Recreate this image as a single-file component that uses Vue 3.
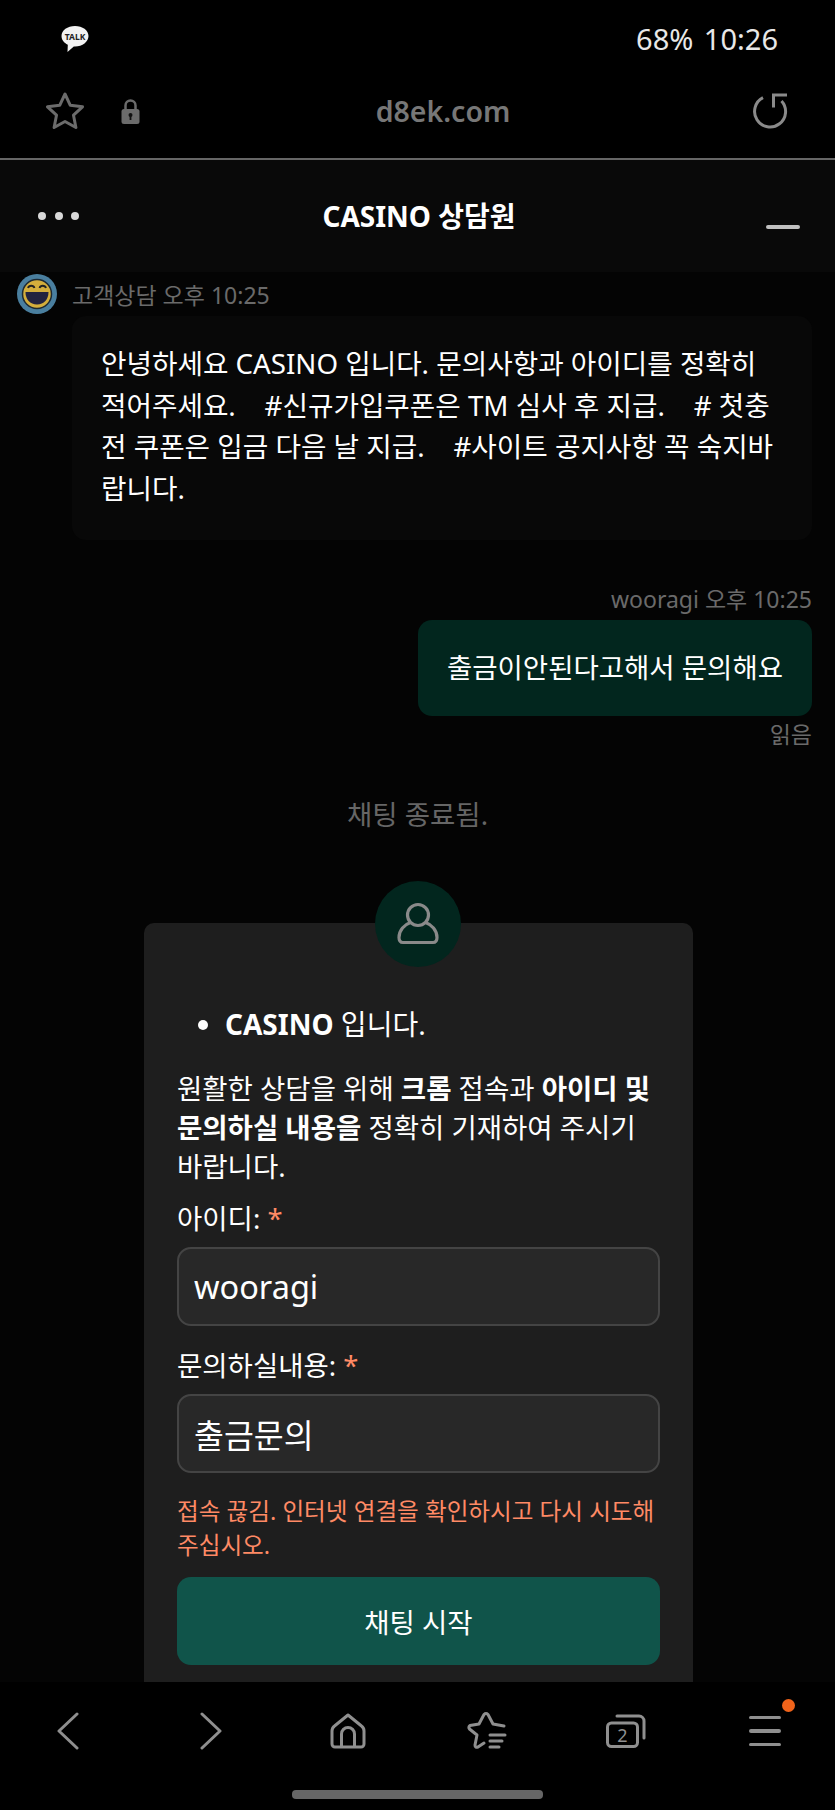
<script setup>
const intro = '안녕하세요 CASINO 입니다. 문의사항과 아이디를 정확히 적어주세요.    #신규가입쿠폰은 TM 심사 후 지급.    # 첫충전 쿠폰은 입금 다음 날 지급.    #사이트 공지사항 꼭 숙지바랍니다.'
</script>

<template>
  <div class="screen">
    <div class="status">
      <svg class="talk" width="30" height="28" viewBox="0 0 30 28">
        <path d="M15 1C7.500 1 1.500 5.300 1.500 11c0 3.700 2.500 6.900 6.300 8.700L7.500 27l6.300-5.500h1.200c7.500 0 13.500-4.800 13.500-10.500S22.500 1 15 1z" fill="#f2f2f2" />
        <text x="15" y="15" text-anchor="middle" font-size="8.500" font-weight="700" fill="#222">TALK</text>
      </svg>
      <span class="clock">68% 10:26</span>
    </div>

    <div class="address">
      <svg class="star" width="38" height="38" viewBox="0 0 38 38" fill="none" stroke="#6b6b6b" stroke-width="3" stroke-linejoin="round">
        <path d="M19 2l5.300 11.300 12.200 1.500-9 8.400 2.400 12.300L19 29.500 8.100 35.500l2.400-12.300-9-8.400 12.200-1.500z" />
      </svg>
      <svg class="lock" width="19" height="25" viewBox="0 0 19 25">
        <path d="M4.500 11V6.500a5 5 0 0 1 10 0V11" fill="none" stroke="#6b6b6b" stroke-width="2.500" />
        <rect x="0.500" y="10" width="18" height="15" rx="2.500" fill="#6b6b6b" />
        <circle cx="9.500" cy="16" r="2" fill="#111" />
        <rect x="8.600" y="16" width="1.800" height="5" fill="#111" />
      </svg>
      <span class="url">d8ek.com</span>
      <svg class="reload" width="38" height="38" viewBox="0 0 38 38" fill="none" stroke="#8a8a8a" stroke-width="3">
        <path d="M13 5.700A15.500 15.500 0 1 0 31.500 9" />
        <path d="M37 3H23.500V15.500" />
      </svg>
    </div>

    <div class="chat">
      <div class="chat-head">
        <div class="dots"><i></i><i></i><i></i></div>
        <div class="title">CASINO 상담원</div>
        <div class="minimize"></div>
      </div>

      <div class="agent">
        <div class="agent-meta">
          <svg width="42" height="40" viewBox="0 0 42 40">
            <circle cx="21" cy="20" r="20" fill="#4a7f9f" />
            <circle cx="21" cy="20" r="14.500" fill="#d4ae3c" stroke="#1e2a33" stroke-width="1.500" />
            <path d="M9.500 18h23c0 7.500-4.500 12.500-11.500 12.500S9.500 25.500 9.500 18z" fill="#23233f" />
            <path d="M12 14c1-3 5.500-3 6.500 0M23.500 14c1-3 5.500-3 6.500 0" fill="none" stroke="#222" stroke-width="1.800" />
          </svg>
          <span class="meta">고객상담 오후 10:25</span>
        </div>
        <div class="bubble-in">{{ intro }}</div>
      </div>

      <div class="visitor">
        <div class="meta">wooragi 오후 10:25</div>
        <div class="bubble-out">출금이안된다고해서 문의해요</div>
        <div class="meta read">읽음</div>
      </div>

      <div class="ended">채팅 종료됨.</div>

      <div class="card">
        <div class="card-avatar">
          <svg width="42" height="44" viewBox="0 0 42 44" fill="none" stroke="#8a8a8a" stroke-width="3.200">
            <circle cx="21" cy="13" r="10.500" />
            <path d="M13.500 20.500C7.500 22.500 2 28 2 35.500c0 3 1.500 5 4 5h30c2.500 0 4-2 4-5 0-7.500-5.500-13-11.500-15" />
          </svg>
        </div>
        <ul>
          <li><b>CASINO</b> 입니다.</li>
        </ul>
        <p class="notice">원활한 상담을 위해 <b>크롬</b> 접속과 <b>아이디 및 문의하실 내용을</b> 정확히 기재하여 주시기 바랍니다.</p>
        <label>아이디: <em>*</em></label>
        <input class="field" type="text" value="wooragi" readonly />
        <label>문의하실내용: <em>*</em></label>
        <input class="field" type="text" value="출금문의" readonly />
        <p class="error">접속 끊김. 인터넷 연결을 확인하시고 다시 시도해 주십시오.</p>
        <button class="start">채팅 시작</button>
      </div>
    </div>

    <div class="nav">
      <svg class="back" width="22" height="38" viewBox="0 0 22 38" fill="none" stroke="#8f8f8f" stroke-width="3" stroke-linecap="round" stroke-linejoin="round"><path d="M20 2L2 19l18 17" /></svg>
      <svg class="forward" width="22" height="38" viewBox="0 0 22 38" fill="none" stroke="#8f8f8f" stroke-width="3" stroke-linecap="round" stroke-linejoin="round"><path d="M2 2l18 17L2 36" /></svg>
      <svg width="36" height="36" viewBox="0 0 36 36" fill="none" stroke="#8f8f8f" stroke-width="3" stroke-linejoin="round"><path d="M18 2L4.500 13a6 6 0 0 0-2.500 5v13a3 3 0 0 0 3 3h26a3 3 0 0 0 3-3V18a6 6 0 0 0-2.500-5z" /><path d="M11.500 34V21a6.500 6.500 0 0 1 13 0v13" /></svg>
      <svg width="40" height="38" viewBox="0 0 40 38" fill="none" stroke="#8f8f8f" stroke-width="3" stroke-linecap="round" stroke-linejoin="round"><path d="M37 14l-11-2-5-9.500q-2-2-4 0L12 12l-9 1.500q-2 1.500-.5 3.500L10 23 8 33q0 3 3 2l6-4" /><path d="M23 23h15M23 29h12M23 35h9" /></svg>
      <div class="tabs">
        <svg width="40" height="34" viewBox="0 0 40 34" fill="none" stroke="#8f8f8f" stroke-width="3" stroke-linecap="round" stroke-linejoin="round"><rect x="1.500" y="9" width="30" height="23.500" rx="4" /><path d="M11 2h22a5 5 0 0 1 5 5v17" /></svg>
        <span>2</span>
      </div>
      <div class="menu"><i></i><i></i><i></i><span class="badge"></span></div>
    </div>

    <div class="home-bar"><span></span></div>
  </div>
</template>

<style scoped>
.screen {
  width: 835px;
  height: 1810px;
  background: #000;
  color: #fff;
  font-family: "Noto Sans", "Noto Sans CJK KR", sans-serif;
  display: flex;
  flex-direction: column;
  overflow: hidden;
}
.status {
  height: 55px;
  flex: none;
  display: flex;
  align-items: center;
  justify-content: space-between;
  padding: 22px 57px 0 60px;
  box-sizing: border-box;
}
.clock {
  font-size: 29px;
  word-spacing: 3px;
  color: #e8e8e8;
}
.address {
  height: 105px;
  flex: none;
  display: flex;
  align-items: center;
  padding: 9px 47px 0 46px;
  border-bottom: 2px solid #666;
  box-sizing: border-box;
}
.lock {
  margin-left: 37px;
}
.url {
  flex: 1;
  text-align: center;
  font-size: 28.500px;
  font-weight: 600;
  color: #777;
  padding-right: 4px;
}
.chat {
  flex: 1;
  min-height: 0;
  overflow: hidden;
  background: #040404;
}
.chat-head {
  height: 112px;
  background: #090909;
  display: grid;
  grid-template-columns: 1fr auto 1fr;
  align-items: center;
  padding: 0 35px 0 38px;
}
.dots {
  display: flex;
  gap: 8.500px;
}
.dots i {
  width: 8px;
  height: 8px;
  border-radius: 50%;
  background: #d8d8d8;
}
.title {
  font-size: 28px;
  font-weight: 700;
  margin-bottom: 3px;
}
.minimize {
  justify-self: end;
  width: 34px;
  height: 4px;
  margin-top: 22px;
  background: #c0c0c0;
  border-radius: 2px;
}
.agent {
  padding: 2px 23px 0 16px;
}
.agent-meta {
  display: flex;
  align-items: center;
  gap: 14px;
}
.meta {
  font-size: 23px;
  color: #6a6a6a;
}
.bubble-in {
  margin: 2px 0 0 56px;
  padding: 27px 29px 31px;
  background: #080808;
  border-radius: 14px;
  font-size: 27.700px;
  line-height: 41.500px;
  white-space: pre-wrap;
  word-break: break-all;
}
.visitor {
  margin-top: 41px;
  padding-right: 23px;
  display: flex;
  flex-direction: column;
  align-items: flex-end;
}
.bubble-out {
  margin-top: 5px;
  padding: 28px 29px;
  background: #02261e;
  border-radius: 14px;
  font-size: 27.500px;
  line-height: 40px;
}
.read {
  margin-top: 0;
}
.ended {
  margin-top: 43px;
  text-align: center;
  font-size: 27.500px;
  color: #666;
}
.card {
  position: relative;
  width: 549px;
  margin: 90px 0 0 144px;
  padding: 82px 33px 60px 33px;
  box-sizing: border-box;
  background: #1e1e1e;
  border-radius: 10px;
}
.card-avatar {
  position: absolute;
  top: -42px;
  left: 231px;
  width: 86px;
  height: 86px;
  border-radius: 50%;
  background: #02261e;
  display: flex;
  align-items: center;
  justify-content: center;
}
ul {
  margin: 0;
  padding-left: 48px;
  font-size: 28px;
  line-height: 39px;
}
.notice {
  margin: 25px 0 0;
  font-size: 27.500px;
  line-height: 39px;
  word-break: keep-all;
}
label {
  display: block;
  margin-top: 13px;
  font-size: 27.500px;
  line-height: 39px;
}
label em {
  color: #ff8a65;
  font-style: normal;
}
.field {
  display: block;
  width: 100%;
  height: 79px;
  margin-top: 9px;
  padding: 0 15px;
  box-sizing: border-box;
  background: #282828;
  border: 2px solid #444;
  border-radius: 14px;
  color: #fff;
  font-family: inherit;
  font-size: 32.500px;
  outline: none;
}
.field + label {
  margin-top: 20px;
}
.error {
  margin: 21px 0 0;
  font-size: 23.600px;
  line-height: 34px;
  color: #ff8a65;
}
.start {
  display: block;
  width: 100%;
  height: 88px;
  margin-top: 15px;
  border: none;
  border-radius: 14px;
  background: #10544a;
  color: #fff;
  font-family: inherit;
  font-size: 27.500px;
}
.nav {
  height: 93px;
  flex: none;
  display: grid;
  grid-template-columns: repeat(6, 139px);
  justify-items: center;
  align-items: center;
  padding-top: 5px;
  box-sizing: border-box;
  background: #000;
}
.back {
  margin-right: 4px;
}
.forward {
  margin-left: 5px;
}
.tabs {
  position: relative;
  width: 40px;
  height: 34px;
}
.tabs svg {
  display: block;
}
.tabs span {
  position: absolute;
  left: 1px;
  top: 9px;
  width: 32px;
  text-align: center;
  font-size: 18px;
  line-height: 24px;
  color: #8f8f8f;
}
.menu {
  position: relative;
  width: 32px;
  display: flex;
  flex-direction: column;
  gap: 10px;
}
.menu i {
  height: 3.500px;
  background: #8f8f8f;
  border-radius: 2px;
}
.badge {
  position: absolute;
  top: -17px;
  right: -14px;
  width: 13px;
  height: 13px;
  border-radius: 50%;
  background: #f0631a;
}
.home-bar {
  height: 35px;
  flex: none;
  display: flex;
  justify-content: center;
  padding-top: 15px;
  box-sizing: border-box;
}
.home-bar span {
  width: 251px;
  height: 9px;
  border-radius: 4px;
  background: #666;
}
</style>
